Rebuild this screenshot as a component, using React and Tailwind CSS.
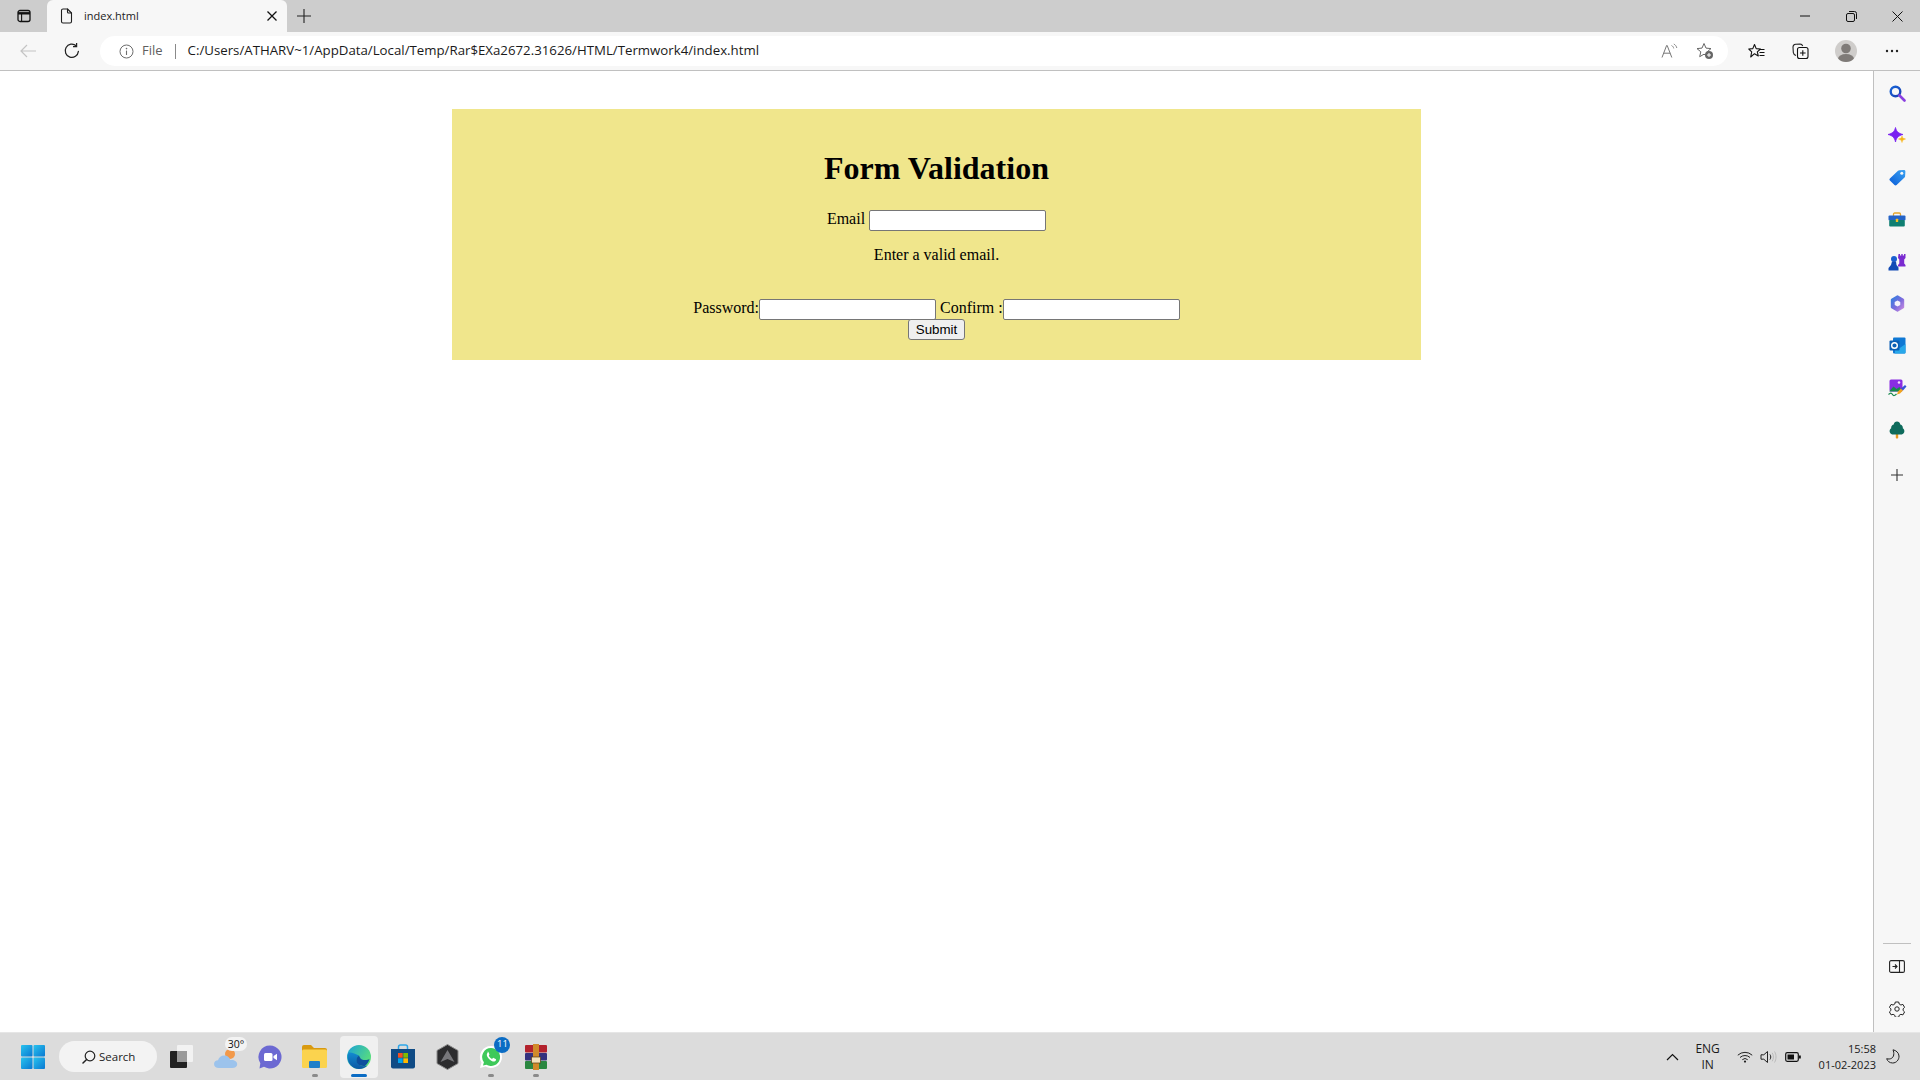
import React from "react";

const ui = "font-['Open_Sans','Noto_Sans',sans-serif]";

function Svg({ w = 16, h = 16, vb, children, className = "" }) {
  return (
    <svg width={w} height={h} viewBox={vb || `0 0 ${w} ${h}`} fill="none" className={`block shrink-0 ${className}`}>
      {children}
    </svg>
  );
}

const S = { stroke: "#1f1f1f", strokeWidth: 1.1, strokeLinecap: "round", strokeLinejoin: "round" };

const SideToggle = () => (
  <Svg w={14} h={14}>
    <rect x="1" y="1.5" width="12" height="11" rx="2" stroke="#111" strokeWidth="1.3" />
    <path d="M1 4.3h12" stroke="#111" strokeWidth="2.4" />
    <path d="M4.6 4v8" stroke="#111" strokeWidth="1.1" />
  </Svg>
);
const FileIcon = () => (
  <Svg w={13} h={16}>
    <path d="M1.5 2.5a1.5 1.5 0 0 1 1.5-1.5h4.5l4 4v8.5a1.5 1.5 0 0 1-1.5 1.5H3a1.5 1.5 0 0 1-1.5-1.5z" {...S} />
    <path d="M7.5 1v3a1 1 0 0 0 1 1h3" {...S} />
  </Svg>
);
const X = ({ s = 10, c = "#111", sw = 1.3 }) => (
  <Svg w={s} h={s}>
    <path d={`M0.5 0.5L${s - 0.5} ${s - 0.5}M${s - 0.5} 0.5L0.5 ${s - 0.5}`} stroke={c} strokeWidth={sw} />
  </Svg>
);
const Plus = ({ s = 14, c = "#222" }) => (
  <Svg w={s} h={s}>
    <path d={`M${s / 2} 0V${s}M0 ${s / 2}H${s}`} stroke={c} strokeWidth="1.1" />
  </Svg>
);
const Back = () => (
  <Svg w={17} h={14}>
    <path d="M1 7h15M7 1L1 7l6 6" stroke="#c4c4c4" strokeWidth="1.2" />
  </Svg>
);
const Reload = () => (
  <Svg w={18} h={18}>
    <path d="M15.400 9.400A6.600 6.600 0 1 1 13.200 3.800" stroke="#222" strokeWidth="1.250" strokeLinecap="round" />
    <path d="M13.600 1v3.600H10" stroke="#222" strokeWidth="1.250" />
  </Svg>
);
const Info = () => (
  <Svg w={15} h={15}>
    <circle cx="7.5" cy="7.5" r="6.5" stroke="#6d6d6d" />
    <path d="M7.5 6.6v4.4" stroke="#6d6d6d" strokeWidth="1.1" />
    <circle cx="7.5" cy="4.6" r=".8" fill="#6d6d6d" />
  </Svg>
);
const ReadAloud = () => (
  <Svg w={17} h={16}>
    <path d="M1 14.5L5.6 2.5h.6l4.6 12M2.7 10.2h6.5" stroke="#777" strokeWidth="1" />
    <path d="M10.5 2.5c1.3.6 2 1.6 2.2 2.9M12.8 1c1.6.9 2.7 2.3 3 4" stroke="#888" strokeWidth="1" />
  </Svg>
);
const StarPlus = () => (
  <Svg w={18} h={18}>
    <path d="M8 1.5l2 4.6 5 .5-3.8 3.2 1.1 4.9L8 12.2l-4.3 2.5 1.1-4.9L1 6.6l5-.5z" stroke="#666" strokeWidth="1" strokeLinejoin="round" />
    <circle cx="13" cy="13" r="4" fill="#666" />
    <path d="M13 11v4M11 13h4" stroke="#fff" />
  </Svg>
);
const Favs = () => (
  <Svg w={17} h={17}>
    <path d="M6.500 1.500l1.700 4.100 4.300.4-3.200 2.800 1 4.200-3.800-2.300-3.800 3.300 1-5.200L.8 6l4-.4z" stroke="#111" strokeWidth="1.100" strokeLinejoin="round" />
    <path d="M11.500 6.500h5M11.500 9.500h5M11.500 12.500h5" stroke="#111" strokeWidth="1.100" />
  </Svg>
);
const Collections = () => (
  <Svg w={17} h={17}>
    <path d="M4 12.500C2.500 12 1.500 11 1.300 9.500L1 4c0-1.600 1-2.700 2.600-2.800L8 1c1.400 0 2.300.8 2.700 2" stroke="#222" strokeWidth="1.100" />
    <rect x="5.500" y="4.500" width="10.500" height="11" rx="2" stroke="#111" strokeWidth="1.100" />
    <path d="M10.800 7.200v5.600M8 10h5.600" stroke="#111" strokeWidth="1.100" />
  </Svg>
);
const Avatar = () => (
  <svg width="22" height="22" viewBox="0 0 22 22" className="block shrink-0">
    <defs>
      <clipPath id="avatar-clip"><circle cx="11" cy="11" r="11" /></clipPath>
    </defs>
    <g clipPath="url(#avatar-clip)">
      <rect width="22" height="22" fill="#cfcdcb" />
      <circle cx="11" cy="8.500" r="4.800" fill="#7f7b78" />
      <ellipse cx="11" cy="19" rx="8" ry="5" fill="#7f7b78" />
    </g>
  </svg>
);
const Dots = () => (
  <Svg w={14} h={4}>
    <circle cx="2" cy="2" r="1.200" fill="#222" />
    <circle cx="7" cy="2" r="1.200" fill="#222" />
    <circle cx="12" cy="2" r="1.200" fill="#222" />
  </Svg>
);
const Minimize = () => (
  <Svg w={10} h={2}><path d="M0 1h10" stroke="#111" strokeWidth="1" /></Svg>
);
const Restore = () => (
  <Svg w={11} h={11}>
    <rect x=".5" y="2.500" width="8" height="8" rx="1.500" stroke="#111" />
    <path d="M3 .5h5.500a2 2 0 0 1 2 2V8" stroke="#111" />
  </Svg>
);

/* side bar */
const SideSearch = () => (
  <Svg w={17} h={17}>
    <defs>
      <linearGradient id="ss" x1="0" y1="0" x2="1" y2="1"><stop stopColor="#1765d8" /><stop offset="1" stopColor="#1b3fb0" /></linearGradient>
    </defs>
    <circle cx="6.500" cy="6.500" r="4.800" stroke="url(#ss)" strokeWidth="2.400" />
    <path d="M10.500 10.500l5 5" stroke="#8a3fe0" strokeWidth="2.600" strokeLinecap="round" />
  </Svg>
);
const Spark = () => (
  <Svg w={18} h={17}>
    <path d="M7.500 0.500c1 4.200 2.800 5.800 7.500 7-4.700 1.200-6.500 3-7.500 7.500-1-4.500-2.800-6.300-7.500-7.500 4.700-1.200 6.500-2.800 7.500-7z" fill="#7a22f0" stroke="#7a22f0" strokeWidth=".8" strokeLinejoin="round" />
    <path d="M14 9c.3 1.800 1 2.500 3.500 3-2.500.6-3.200 1.300-3.500 3.500-.3-2.200-1-2.900-3.500-3.500 2.500-.5 3.200-1.200 3.500-3z" fill="#f8b417" stroke="#f8b417" strokeWidth=".5" strokeLinejoin="round" />
  </Svg>
);
const Tag = () => (
  <Svg w={17} h={17}>
    <defs>
      <linearGradient id="tg" x1="0" y1="1" x2="1" y2="0"><stop stopColor="#0a5cd8" /><stop offset="1" stopColor="#3ba3f2" /></linearGradient>
    </defs>
    <path d="M.9 9.500L9 1.800c.4-.4.900-.6 1.400-.6l4.600-.2c.8 0 1.400.6 1.400 1.400l-.3 4.900c0 .5-.2.900-.6 1.300L7.600 16c-.6.600-1.500.6-2.100 0L.9 11.600c-.6-.6-.6-1.500 0-2.100z" fill="url(#tg)" />
    <circle cx="12.800" cy="4.200" r="1.500" fill="#f7f7f7" />
  </Svg>
);
const Toolbox = () => (
  <Svg w={18} h={15}>
    <path d="M5.500 4V2.200C5.500 1.500 6 1 6.700 1h4.600c.7 0 1.200.5 1.200 1.200V4" stroke="#e6a52c" strokeWidth="1.300" />
    <rect x="0.500" y="3.500" width="17" height="5" rx="1" fill="#2463c7" />
    <rect x="1.200" y="8" width="15.600" height="6.500" rx="1" fill="#0f7f72" />
    <rect x="7.800" y="6.800" width="2.400" height="3.200" rx=".5" fill="#f5c026" />
  </Svg>
);
const Chess = () => (
  <Svg w={18} h={18}>
    <path d="M10.500 1h1.500v1.500h1.300V1h1.400v1.500H16V1h1.500v4l-1.300 1.500v4l1.300 1.500v1.500H10V12l1.300-1.500v-4L10 5z" fill="#7a2bd0" />
    <circle cx="6" cy="6" r="3" fill="#1a5fd0" />
    <path d="M4 8.500h4l.5 3.500 2 2.500V17.500H.5V15l2.500-3z" fill="#124ab5" />
  </Svg>
);
const M365 = () => (
  <Svg w={17} h={17}>
    <defs>
      <linearGradient id="mg" x1="0" y1="0" x2="1" y2="1"><stop stopColor="#2f7fe0" /><stop offset=".55" stopColor="#7d6bdd" /><stop offset="1" stopColor="#c98be0" /></linearGradient>
    </defs>
    <path d="M8.500 1.500l5.500 3.200v7.600l-5.500 3.200L3 12.300V4.700z" fill="url(#mg)" stroke="url(#mg)" strokeWidth="2.400" strokeLinejoin="round" />
    <path d="M8.500 5.500l2.800 1.600v2.800l-2.800 1.600-2.800-1.600V7.100z" fill="#f4f2fb" />
  </Svg>
);
const Outlook = () => (
  <Svg w={17} h={17}>
    <rect x="4" y="0.500" width="12.500" height="16" rx="1" fill="#0f78d4" />
    <path d="M6 8l4.500 3.300L16.500 7v8.500a1 1 0 0 1-1 1H6z" fill="#28a8ea" />
    <rect x="0.500" y="3.500" width="10" height="10" rx="1" fill="#0a5fb5" />
    <circle cx="5.500" cy="8.500" r="2.800" stroke="#fff" strokeWidth="1.400" />
  </Svg>
);
const Designer = () => (
  <Svg w={19} h={18}>
    <rect x="1.500" y="0.500" width="13" height="12" rx="1.500" fill="#8a2de2" />
    <circle cx="11" cy="3.500" r="1.300" fill="#f6d9ff" />
    <path d="M1.500 12l4-4.500 3 2.500 3-2 2 3v1.500h-12z" fill="#178a4c" />
    <path d="M.5 15.500c2-1.800 3-1.800 4 0s2.500 1 4-.5" stroke="#178a4c" strokeWidth="1.200" />
    <path d="M9 15.500l1-3 3-3 2 2-3 3z" fill="#f2a51f" />
    <path d="M13 9.500l4-3.500 1.500 1.500-3.500 4z" fill="#3554d6" />
  </Svg>
);
const Tree = () => (
  <Svg w={16} h={18}>
    <rect x="6.800" y="12" width="2.400" height="5.500" rx=".7" fill="#e79a1e" />
    <path d="M8 .5c1.800 0 3 1.300 3.300 2.900 1.800.6 2.800 2.200 2.500 3.800 1.400 1 1.900 2.600 1.400 4-.5 1.600-2 2.300-3.700 2.300H4.500c-1.700 0-3.200-.7-3.700-2.300-.5-1.400 0-3 1.400-4-.3-1.600.7-3.200 2.500-3.800C5 1.800 6.200.5 8 .5z" fill="#0e6b5c" />
  </Svg>
);
const SplitPanel = () => (
  <Svg w={16} h={13}>
    <rect x=".6" y=".6" width="14.800" height="11.800" rx="1.500" stroke="#222" strokeWidth="1.100" />
    <path d="M10.500.6v11.800" stroke="#222" strokeWidth="1.100" />
    <path d="M3.500 6.500h4M6 4.500l2 2-2 2" stroke="#222" strokeWidth="1.100" />
  </Svg>
);
const Gear = () => (
  <Svg w={16} h={16}>
    <path d="M6.300 1h3.400l.5 2 1.700 1 2-.6 1.700 3-1.500 1.400v1.700l1.500 1.400-1.700 3-2-.6-1.700 1-.5 2H6.300l-.5-2-1.700-1-2 .6-1.700-3 1.500-1.400V7.800L.4 6.400l1.700-3 2 .6 1.700-1z" stroke="#222" strokeWidth="1" strokeLinejoin="round" />
    <circle cx="8" cy="8" r="2.200" stroke="#222" strokeWidth="1" />
  </Svg>
);

/* taskbar */
const WinLogo = () => (
  <Svg w={24} h={24}>
    <defs>
      <linearGradient id="wl" x1="0" y1="0" x2="1" y2="1"><stop stopColor="#28c3ee" /><stop offset="1" stopColor="#0a78d2" /></linearGradient>
    </defs>
    <rect x="0" y="0" width="11.500" height="11.500" rx="1" fill="url(#wl)" />
    <rect x="12.500" y="0" width="11.500" height="11.500" rx="1" fill="url(#wl)" />
    <rect x="0" y="12.500" width="11.500" height="11.500" rx="1" fill="url(#wl)" />
    <rect x="12.500" y="12.500" width="11.500" height="11.500" rx="1" fill="url(#wl)" />
  </Svg>
);
const Magnifier = () => (
  <Svg w={14} h={14}>
    <circle cx="8" cy="6" r="4.800" stroke="#222" strokeWidth="1.200" />
    <path d="M4.600 9.500L1 13" stroke="#222" strokeWidth="1.500" strokeLinecap="round" />
  </Svg>
);
const TaskView = () => (
  <Svg w={24} h={24}>
    <rect x="7" y="0" width="16" height="17" rx="1" fill="#f2f2f2" />
    <rect x="0" y="6" width="17" height="17" rx="1" fill="#222" />
    <rect x="7" y="6" width="10" height="11" fill="#9a9a9a" />
  </Svg>
);
const Weather = () => (
  <Svg w={24} h={24}>
    <circle cx="16" cy="9" r="5" fill="#f2994a" />
    <path d="M5 23c-3 0-5-1.600-5-4s1.800-3.800 4-3.800C5 12 8 10 11 10.500c3 .4 5 2.500 5.200 4.500 4-.5 7 1.200 7 4.200 0 2.400-2 3.800-5 3.800z" fill="#9cc3ec" />
  </Svg>
);
const Chat = () => (
  <Svg w={24} h={24}>
    <path d="M12 0.500A11.500 11.500 0 1 1 6 21.800L1.500 23.500l.8-5.300A11.500 11.500 0 0 1 12 .5z" fill="#6c69d2" />
    <rect x="6" y="8" width="8.500" height="8" rx="1.500" fill="#fff" />
    <path d="M15.500 11l3.500-2.300v6.600L15.500 13z" fill="#fff" />
  </Svg>
);
const Explorer = () => (
  <Svg w={25} h={23}>
    <path d="M0 2a2 2 0 0 1 2-2h7l3 3h11a2 2 0 0 1 2 2v3H0z" fill="#d99a10" />
    <rect x="0" y="4.500" width="25" height="18.500" rx="1.500" fill="#fbd34e" />
    <rect x="7" y="16" width="11" height="7" rx="1" fill="#1f7fc9" />
  </Svg>
);
const Edge = () => (
  <Svg w={24} h={24}>
    <defs>
      <linearGradient id="eg" x1="0" y1="0" x2="1" y2=".6"><stop stopColor="#1aa0d8" /><stop offset="1" stopColor="#5be07a" /></linearGradient>
      <linearGradient id="eb" x1="0" y1="0" x2="0" y2="1"><stop stopColor="#138bd0" /><stop offset="1" stopColor="#0b57a4" /></linearGradient>
    </defs>
    <circle cx="12" cy="12" r="12" fill="url(#eg)" />
    <path d="M1.500 7.500C-1.500 15 3.500 24 12 24c3.500 0 6.500-1.300 8.500-3.500-4 1.600-9 .3-10.500-3.500-1.200-3 .2-5 2-6.500C8.500 8.500 4.500 7 1.500 7.500z" fill="url(#eb)" />
    <path d="M12 10.500c-2.500 2-3.400 4.500-2 7.200 1.300 2.400 4.800 3.700 8 3.200 2-1.800 4-4.400 4.500-7.200-1.400 1.400-3.900 1.600-6 1.300-2.500-.4-3.800-2.200-4.500-4.500z" fill="#0c4f9e" />
  </Svg>
);
const Store = () => (
  <Svg w={24} h={25}>
    <path d="M7.500 6V3a2 2 0 0 1 2-2h5a2 2 0 0 1 2 2v3" stroke="#2ea6e8" strokeWidth="1.500" />
    <path d="M0 5h24v17.500a2 2 0 0 1-2 2H2a2 2 0 0 1-2-2z" fill="#0f4b85" />
    <rect x="7" y="9" width="4.700" height="4.700" fill="#f25022" />
    <rect x="12.300" y="9" width="4.700" height="4.700" fill="#7fba00" />
    <rect x="7" y="14.300" width="4.700" height="4.700" fill="#00a4ef" />
    <rect x="12.300" y="14.300" width="4.700" height="4.700" fill="#ffb900" />
  </Svg>
);
const Hex = () => (
  <Svg w={23} h={26}>
    <path d="M11.500 0.500L22 6.500v13l-10.500 6L1 19.500v-13z" fill="#2c2c2e" stroke="#8c8c8c" />
    <path d="M4.500 18L11.500 6l7 12-7-3z" fill="#77777b" />
  </Svg>
);
const WhatsApp = () => (
  <Svg w={24} h={24}>
    <path d="M12 1a11 11 0 1 1-5.400 20.600L1 23l1.500-5.400A11 11 0 0 1 12 1z" fill="#fff" />
    <path d="M12 3a9 9 0 1 1-4.600 16.700l-3.400.9.900-3.300A9 9 0 0 1 12 3z" fill="#3ec95a" />
    <path d="M8.800 7.500c-1.200 1-1.300 2.800-.3 4.600 1.300 2.300 3.200 3.800 5.300 4.300 1.500.3 2.800-.4 3.200-1.500.2-.6 0-.8-.4-1l-2-1c-.4-.2-.6 0-.9.400-.4.600-.7.700-1.200.4-1.200-.6-2-1.500-2.600-2.600-.2-.4 0-.6.300-1 .3-.4.300-.7.100-1.100l-.8-1.800c-.2-.5-.6-.6-1.100-.4z" fill="#fff" />
  </Svg>
);
const WinRar = () => (
  <Svg w={24} h={26}>
    <rect x="1" y="1" width="22" height="7.500" rx="1" fill="#b3222d" />
    <rect x="1" y="9" width="22" height="7.500" rx="1" fill="#34317e" />
    <rect x="1" y="17" width="22" height="8" rx="1" fill="#2b8741" />
    <rect x="9" y="0" width="6" height="26" fill="#d18a2a" />
    <rect x="7.500" y="13" width="9" height="6" fill="#f4e2bb" stroke="#5b3a10" strokeWidth=".7" />
  </Svg>
);
const Chevron = () => (
  <Svg w={13} h={8}>
    <path d="M1 7l5.500-5.500L12 7" stroke="#111" strokeWidth="1.200" />
  </Svg>
);
const Wifi = () => (
  <Svg w={16} h={12}>
    <path d="M.8 4.200a10.500 10.500 0 0 1 14.400 0M3 6.500a7.300 7.300 0 0 1 10 0M5.300 8.700a4 4 0 0 1 5.400 0" stroke="#222" strokeWidth="1" />
    <circle cx="8" cy="10.600" r="1.100" fill="#222" />
  </Svg>
);
const Speaker = () => (
  <Svg w={17} h={14}>
    <path d="M1 4.800h2.800L7.500 1.500v11L3.800 9.200H1z" stroke="#222" strokeWidth="1" strokeLinejoin="round" />
    <path d="M10 4.500c1 1.500 1 3.500 0 5" stroke="#222" />
    <path d="M12.200 2.800c1.600 2.500 1.600 6 0 8.500M14.500 1.500c2 3.300 2 7.700 0 11" stroke="#bbb" />
  </Svg>
);
const Battery = () => (
  <Svg w={16} h={10}>
    <rect x=".7" y=".7" width="12.600" height="8.600" rx="1.500" stroke="#111" strokeWidth="1.200" />
    <rect x="2.500" y="2.500" width="6.500" height="5" fill="#111" />
    <rect x="14" y="3.500" width="1.800" height="3" fill="#111" />
  </Svg>
);
const Moon = () => (
  <Svg w={14} h={15}>
    <path d="M7 .8c3 .6 5.800 2.800 6 6.200.2 3.800-2.700 7-6.300 7C3.500 14 1.300 12 .7 9.700c3.500 1 6.500-.5 7-3.700.3-2-.1-3.700-.7-5.200z" stroke="#222" strokeWidth="1" strokeLinejoin="round" />
  </Svg>
);

const sideIcons = [SideSearch, Spark, Tag, Toolbox, Chess, M365, Outlook, Designer, Tree];

function TaskItem({ children, dot, active }) {
  return (
    <div className="relative flex h-[42px] w-[44.2px] shrink-0 items-center justify-center">
      {active && <div className="absolute inset-x-[3px] inset-y-0 rounded-[4px] bg-[#f0f0f0]" />}
      <div className="relative">{children}</div>
      {dot && <div className="absolute bottom-[1px] left-1/2 h-[3px] w-[6px] -translate-x-1/2 rounded-full bg-[#8a8a8a]" />}
      {active && <div className="absolute bottom-[1px] left-1/2 h-[3px] w-[16px] -translate-x-1/2 rounded-full bg-[#0b6cc4]" />}
    </div>
  );
}

export default function App() {
  const field = "inline-block h-[21px] w-[177px] rounded-[2px] border border-[#767676] bg-white align-[-1px] outline-none";
  return (
    <div className={`flex h-screen w-full flex-col overflow-hidden bg-white ${ui}`}>
      {/* tab strip */}
      <div className="flex h-[32px] shrink-0 items-end bg-[#cdcdcd]">
        <div className="flex h-[32px] w-[47px] items-center justify-center pl-[1px]"><SideToggle /></div>
        <div className="flex h-[32px] w-[240px] items-center rounded-t-[6px] bg-[#f7f7f7] pl-[13px] pr-[10px]">
          <FileIcon />
          <span className="ml-[11px] flex-1 text-[11px] text-[#222]">index.html</span>
          <X />
        </div>
        <div className="flex h-[32px] w-[34px] items-center justify-center"><Plus /></div>
        <div className="flex-1" />
        <div className="flex h-[32px] w-[46px] items-center justify-center"><Minimize /></div>
        <div className="flex h-[32px] w-[46px] items-center justify-center"><Restore /></div>
        <div className="flex h-[32px] w-[46px] items-center justify-center"><X s={11} sw={1} /></div>
      </div>

      {/* address bar */}
      <div className="flex h-[39px] shrink-0 items-center border-b border-[#c0c0c0] bg-[#f7f7f7]">
        <div className="flex w-[56px] justify-center"><Back /></div>
        <div className="flex w-[32px] justify-center"><Reload /></div>
        <div className="ml-[12px] flex h-[30px] w-[1628px] items-center rounded-full bg-white pl-[19px] pr-[12px]">
          <Info />
          <span className="ml-[8px] text-[13px] text-[#5f5f5f]">File</span>
          <div className="ml-[12px] h-[15px] w-px bg-[#8a8a8a]" />
          <span className="ml-[12px] flex-1 text-[13.25px] text-[#1a1a1a]">C:/Users/ATHARV~1/AppData/Local/Temp/Rar$EXa2672.31626/HTML/Termwork4/index.html</span>
          <ReadAloud />
          <div className="ml-[18px] mr-[2px]"><StarPlus /></div>
        </div>
        <div className="flex flex-1 items-center">
          <div className="ml-[20px]"><Favs /></div>
          <div className="ml-[27px]"><Collections /></div>
          <div className="ml-[26px]"><Avatar /></div>
          <div className="ml-[28px]"><Dots /></div>
        </div>
      </div>

      {/* content */}
      <div className="flex min-h-0 flex-1">
        <main className="min-w-0 flex-1 bg-white pt-[38px]">
          <div className="mx-auto w-[969px] bg-[#f0e68c] pb-[20px] pt-[41px] text-center font-['Liberation_Serif',serif] text-[16px] leading-[18px] text-black">
            <h1 className="mb-[22px] text-[32px] font-bold leading-[37px]">Form Validation</h1>
            <div className="h-[21px] leading-[19px]">
              Email <input aria-label="Email" className={field} />
            </div>
            <p className="my-[16px]">Enter a valid email.</p>
            <div className="h-[18px]" />
            <div className="h-[21px] leading-[19px]">
              Password:<input aria-label="Password" className={field} /> Confirm :<input aria-label="Confirm" className={field} />
            </div>
            <div className="h-[21px]">
              <button className="h-[21px] w-[57px] rounded-[3px] border border-[#767676] bg-[#efefef] font-['Liberation_Sans',sans-serif] text-[13.333px] leading-[19px] text-black">Submit</button>
            </div>
          </div>
        </main>
        <aside className="flex w-[47px] shrink-0 flex-col items-center border-l border-[#c0c0c0] bg-[#f7f7f7] pt-[14px]">
          {sideIcons.map((I, i) => (
            <div key={i} className="flex h-[17px] items-center justify-center [&:not(:first-child)]:mt-[25px]"><I /></div>
          ))}
          <div className="mt-[31px]"><Plus s={12} c="#333" /></div>
          <div className="flex-1" />
          <div className="mb-[16px] h-px w-[28px] bg-[#c0c0c0]" />
          <SplitPanel />
          <div className="mb-[15px] mt-[28px]"><Gear /></div>
        </aside>
      </div>

      {/* task bar */}
      <div className="flex h-[48px] shrink-0 items-center border-t border-[#e6e6e6] bg-[#dcdcdc]">
        <div className="ml-[21px]"><WinLogo /></div>
        <div className="ml-[14px] flex h-[31px] w-[98px] items-center rounded-full bg-[#f3f3f3] pl-[23px]">
          <Magnifier />
          <span className="ml-[3px] text-[11.5px] text-[#222]">Search</span>
        </div>
        <div className="ml-[3px] flex items-center">
          <TaskItem><TaskView /></TaskItem>
          <TaskItem>
            <Weather />
            <span className="absolute -right-[9px] -top-[8px] rounded-full bg-[#f3f3f3] px-[3px] text-[10.5px] leading-[14px] text-[#111]">30°</span>
          </TaskItem>
          <TaskItem><Chat /></TaskItem>
          <TaskItem dot><Explorer /></TaskItem>
          <TaskItem active><Edge /></TaskItem>
          <TaskItem><Store /></TaskItem>
          <TaskItem><Hex /></TaskItem>
          <TaskItem dot>
            <WhatsApp />
            <span className="absolute -right-[7px] -top-[8px] flex h-[16px] w-[16px] items-center justify-center rounded-full bg-[#0b6cc4] text-[9.5px] text-white">11</span>
          </TaskItem>
          <TaskItem dot><WinRar /></TaskItem>
        </div>
        <div className="flex-1" />
        <Chevron />
        <div className="ml-[8px] flex w-[42px] flex-col items-center text-[12px] leading-[16px] text-[#1a1a1a]">
          <span>ENG</span>
          <span>IN</span>
        </div>
        <div className="ml-[8px]"><Wifi /></div>
        <div className="ml-[7px]"><Speaker /></div>
        <div className="ml-[8px]"><Battery /></div>
        <div className="ml-[18px] flex flex-col items-end text-[11px] leading-[16px] text-[#1a1a1a]">
          <span>15:58</span>
          <span>01-02-2023</span>
        </div>
        <div className="ml-[10px] mr-[20px]"><Moon /></div>
      </div>
    </div>
  );
}
